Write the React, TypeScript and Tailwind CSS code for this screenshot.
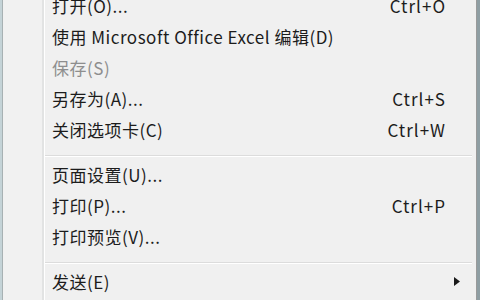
import React from 'react';

type Item =
  | { kind: 'item'; label: string; shortcut?: string; disabled?: boolean; submenu?: boolean }
  | { kind: 'sep' };

const items: Item[] = [
  { kind: 'item', label: '打开(O)...', shortcut: 'Ctrl+O' },
  { kind: 'item', label: '使用 Microsoft Office Excel 编辑(D)' },
  { kind: 'item', label: '保存(S)', disabled: true },
  { kind: 'item', label: '另存为(A)...', shortcut: 'Ctrl+S' },
  { kind: 'item', label: '关闭选项卡(C)', shortcut: 'Ctrl+W' },
  { kind: 'sep' },
  { kind: 'item', label: '页面设置(U)...' },
  { kind: 'item', label: '打印(P)...', shortcut: 'Ctrl+P' },
  { kind: 'item', label: '打印预览(V)...' },
  { kind: 'sep' },
  { kind: 'item', label: '发送(E)', submenu: true },
  { kind: 'item', label: '' },
];

export default function App() {
  return (
    <div
      className="w-[480px] h-[300px] overflow-hidden flex bg-[#8f9ea3]"
      style={{ fontFamily: '"Noto Sans CJK SC", "Noto Sans", sans-serif' }}
    >
      {/* left edge of the window behind */}
      <div className="w-[3px] shrink-0 bg-[#c4d3d7] border-r border-[#a7b1b3]" />
      {/* menu */}
      <div className="w-[474px] shrink-0 flex bg-[#f0f0f0] border-r border-[#9a9a9a]">
        {/* icon gutter */}
        <div className="w-[41px] shrink-0 border-r-2 border-r-[#e2e3e3] shadow-[1px_0_0_#ffffff] bg-[#f1f1f1]" />
        <div className="flex-1 flex flex-col mt-[-10px] pl-[1px]">
          {items.map((it, i) =>
            it.kind === 'sep' ? (
              <div key={i} className="h-[14px] shrink-0 pt-[10px] mr-[4px]">
                <div className="w-full border-t border-[#dcdcdc] border-b border-b-white" />
              </div>
            ) : (
              <div
                key={i}
                className={`h-[31px] shrink-0 flex items-center pl-[7px] text-[17px] tracking-[0.5px] ${
                  it.disabled ? 'text-[#8e8e8e]' : 'text-[#1c1c1c]'
                }`}
              >
                <span className="flex-1 whitespace-nowrap">{it.label}</span>
                {it.shortcut && <span className="whitespace-nowrap tracking-[1px]">{it.shortcut}</span>}
                <span className="w-[30px] shrink-0 flex items-center pl-[8px]">
                  {it.submenu && (
                    <svg width="6" height="9" viewBox="0 0 6 9">
                      <path d="M0 0 L6 4.5 L0 9 Z" fill="#1a1a1a" />
                    </svg>
                  )}
                </span>
              </div>
            )
          )}
        </div>
      </div>
    </div>
  );
}
